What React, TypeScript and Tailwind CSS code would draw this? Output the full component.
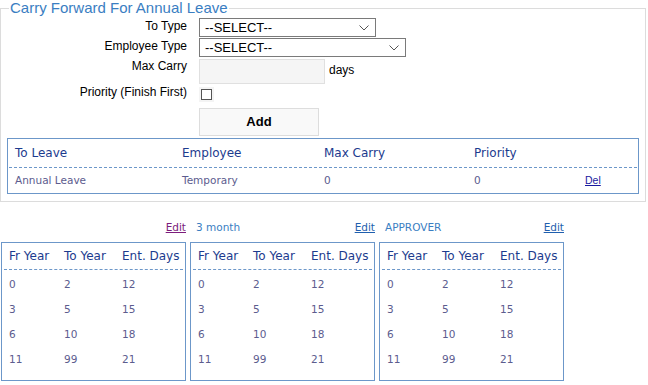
import React from 'react'

// ── Data ──────────────────────────────────────────────────────────────────────
const slabs = [
  ['0', '2', '12'],
  ['3', '5', '15'],
  ['6', '10', '18'],
  ['11', '99', '21'],
]

const groups = [
  { label: '', visited: true },
  { label: '3 month', visited: false },
  { label: 'APPROVER', visited: false },
]

const tableFont = { fontFamily: '"DejaVu Sans", Verdana, sans-serif' }
const formFont = { fontFamily: '"Liberation Sans", Arial, sans-serif' }

// ── Select ────────────────────────────────────────────────────────────────────
function Select({ width }: { width: string }) {
  return (
    <div
      className={`${width} h-[19px] border border-[#7a7a7a] bg-white flex items-center justify-between pl-[5px] pr-[6px] text-[13px] text-black`}
    >
      <span className="leading-none">--SELECT--</span>
      <svg width="10" height="6" viewBox="0 0 10 6" fill="none">
        <path d="M0.5 0.5 L5 5 L9.5 0.5" stroke="#555" strokeWidth="1" />
      </svg>
    </div>
  )
}

// ── Slab table ────────────────────────────────────────────────────────────────
function SlabTable() {
  return (
    <div className="border border-[#6c97c9] h-[139px] px-[2px]" style={tableFont}>
      <div className="flex h-[26px] items-end pb-[4px] pl-[5px] text-[12px] text-[#1c3b8e]">
        <span className="w-[55px]">Fr Year</span>
        <span className="w-[58px]">To Year</span>
        <span>Ent. Days</span>
      </div>
      <div className="border-t border-dashed border-[#6c97c9]" />
      {slabs.map((r, i) => (
        <div
          key={i}
          className={`flex pl-[5px] text-[10.5px] text-[#5c5c8e] items-end ${i === 0 ? 'h-[23px]' : 'h-[25px]'}`}
        >
          <span className="w-[55px]">{r[0]}</span>
          <span className="w-[58px]">{r[1]}</span>
          <span>{r[2]}</span>
        </div>
      ))}
    </div>
  )
}

// ── App ───────────────────────────────────────────────────────────────────────
export default function App() {
  return (
    <div className="w-[648px] h-[385px] bg-white overflow-hidden">
      <fieldset className="w-[646px] border border-[#dcdcdc] pb-[7px] px-[6px]" style={formFont}>
        <legend className="ml-[2px] px-[1px] text-[15px] leading-[16px] text-[#3a7ec2]">
          Carry Forward For Annual Leave
        </legend>

        <div className="flex flex-col text-[12px] text-black">
          <div className="flex mt-[2px]">
            <span className="w-[180px] text-right leading-[14px] pt-[1px]">To Type</span>
            <div className="ml-3">
              <Select width="w-[177px]" />
            </div>
          </div>
          <div className="flex mt-[1px]">
            <span className="w-[180px] text-right leading-[14px] pt-[1px]">Employee Type</span>
            <div className="ml-3">
              <Select width="w-[207px]" />
            </div>
          </div>
          <div className="flex mt-[2px]">
            <span className="w-[180px] text-right leading-[14px]">Max Carry</span>
            <div className="ml-3 w-[126px] h-[25px] bg-[#f5f5f5] border border-[#e0e0e0]" />
            <span className="ml-[4px] leading-[14px] pt-[4px]">days</span>
          </div>
          <div className="flex h-[24px]">
            <span className="w-[180px] text-right leading-[14px] pt-[1px]">Priority (Finish First)</span>
            <div className="ml-3 w-[15px] h-[15px] bg-[#f4f4f4] flex items-center justify-center mt-[3px]">
              <span className="w-[11px] h-[11px] border border-[#555] bg-white" />
            </div>
          </div>
          <button className="ml-[192px] w-[120px] h-[28px] bg-[#f9f9f9] border border-[#dddddd] text-[13px] font-bold text-black">
            Add
          </button>
        </div>

        <div className="mt-[2px] border border-[#6c97c9] h-[56px] px-[1px]" style={tableFont}>
          <div className="flex h-[28px] items-end pb-[5px] pl-[6px] text-[12px] text-[#1c3b8e]">
            <span className="w-[167px]">To Leave</span>
            <span className="w-[142px]">Employee</span>
            <span className="w-[150px]">Max Carry</span>
            <span>Priority</span>
          </div>
          <div className="border-t border-dashed border-[#6c97c9]" />
          <div className="flex h-[21px] items-end pl-[6px] text-[10.5px] text-[#5c5c8e]">
            <span className="w-[167px]">Annual Leave</span>
            <span className="w-[142px]">Temporary</span>
            <span className="w-[150px]">0</span>
            <span className="w-[111px]">0</span>
            <span className="text-[#1a1aa0] underline" style={formFont}>Del</span>
          </div>
        </div>
      </fieldset>

      <div className="flex gap-[4px] ml-[1px] mt-[19px]">
        {groups.map((g, i) => (
          <div key={i} className="w-[185px]">
            <div className="flex justify-between items-end h-[15px] mb-[6px] text-[10.5px]" style={tableFont}>
              <span className="text-[#3a7ec2] pl-[6px]">{g.label}</span>
              <span className={g.visited ? 'text-[#7c1c7c] underline' : 'text-[#1f5fae] underline'}>
                Edit
              </span>
            </div>
            <SlabTable />
          </div>
        ))}
      </div>
    </div>
  )
}
